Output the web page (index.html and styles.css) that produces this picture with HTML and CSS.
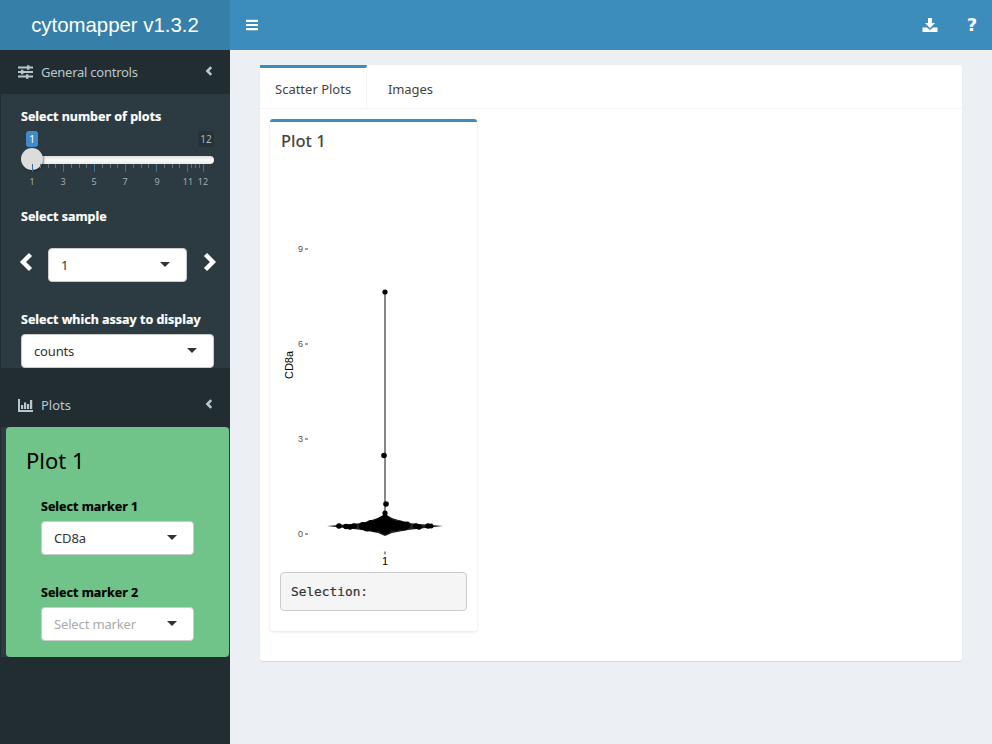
FILE: index.html
```html
<!DOCTYPE html>
<html lang="en">
<head>
<meta charset="utf-8">
<title>cytomapper</title>
<link rel="stylesheet" href="styles.css">
</head>
<body>
<header class="topbar">
  <div class="logo">cytomapper v1.3.2</div>
  <nav class="navbar">
    <svg class="nav-icon burger" width="14" height="14" viewBox="0 0 14 14"><path d="M1 1.700h12v2.200H1zM1 5.900h12v2.200H1zM1 10.100h12v2.200H1z" fill="#fff"/></svg>
    <div class="nav-right">
      <svg class="nav-icon" width="16" height="16" viewBox="0 0 16 16"><path d="M6 1h4v5h3l-5 5-5-5h3z" fill="#fff"/><path d="M0.500 10.500h4.500l3 2.500 3-2.500h4.500V15H0.500z" fill="#fff"/></svg>
      <span class="help">?</span>
    </div>
  </nav>
</header>
<div class="layout">
  <aside class="sidebar">
    <div class="menu-item">
      <svg class="menu-icon" width="15" height="14" viewBox="0 0 15 14"><path d="M0 1.500h15v2H0zM0 6h15v2H0zM0 10.500h15v2H0z" fill="#b8c7ce"/><path d="M9 .2h2.400v4.600H9zM3 4.700h2.400v4.600H3zM8 9.200h2.400v4.600H8z" fill="#b8c7ce"/></svg>
      <span class="menu-label tight">General controls</span>
      <svg class="chev" width="8" height="10" viewBox="0 0 8 10"><path d="M6.200 1.200 2.400 5l3.800 3.800" fill="none" stroke="#b8c7ce" stroke-width="2.600"/></svg>
    </div>
    <div class="tree">
      <div class="label first-label">Select number of plots</div>
      <div class="slider">
        <span class="badge badge-from">1</span>
        <span class="badge badge-to">12</span>
        <div class="track"></div>
        <div class="handle"></div>
        <svg class="ticks" width="200" height="32" viewBox="0 0 200 32">
          <g stroke="#3d6f92" stroke-width="1"><path d="M11.500 0v8M42.500 0v8M73.500 0v8M104.500 0v8M135.500 0v8M166.500 0v8M182.500 0v8"/></g>
          <g stroke="#5f6f78" stroke-width="1"><path d="M19.500 0v4M27.500 0v4M34.500 0v4M50.500 0v4M58.500 0v4M65.500 0v4M81.500 0v4M89.500 0v4M96.500 0v4M112.500 0v4M120.500 0v4M127.500 0v4M143.500 0v4M151.500 0v4M158.500 0v4M170.500 0v4M174.500 0v4M178.500 0v4"/></g>
          <g class="tick-text" text-anchor="middle"><text x="11" y="21">1</text><text x="42" y="21">3</text><text x="73" y="21">5</text><text x="104" y="21">7</text><text x="136" y="21">9</text><text x="167" y="21">11</text><text x="182" y="21">12</text></g>
        </svg>
      </div>
      <div class="label">Select sample</div>
      <div class="sample-row">
        <svg class="arrow" width="14" height="20" viewBox="0 0 14 20"><path d="M11.500 2.500 4 10l7.500 7.500" fill="none" stroke="#fff" stroke-width="4.400"/></svg>
        <div class="select select-sample"><span>1</span><i class="caret"></i></div>
        <svg class="arrow" width="14" height="20" viewBox="0 0 14 20"><path d="M3.500 2.500 11 10l-7.500 7.500" fill="none" stroke="#fff" stroke-width="4.400"/></svg>
      </div>
      <div class="label assay-label">Select which assay to display</div>
      <div class="select"><span>counts</span><i class="caret"></i></div>
    </div>
    <div class="menu-item plots-item">
      <svg class="menu-icon" width="15" height="13" viewBox="0 0 15 13"><path d="M0 0h2v11H15v2H0z" fill="#b8c7ce"/><path d="M3 6h2.200v4H3zM6 3.500h2.200V10H6zM9 5h2.200v5H9zM12 1h2.200v9H12z" fill="#b8c7ce"/></svg>
      <span class="menu-label">Plots</span>
      <svg class="chev" width="8" height="10" viewBox="0 0 8 10"><path d="M6.200 1.200 2.400 5l3.800 3.800" fill="none" stroke="#b8c7ce" stroke-width="2.600"/></svg>
    </div>
    <div class="tree-plots">
      <div class="green-box">
        <h3 class="green-title">Plot 1</h3>
        <div class="marker-group">
          <div class="label dark">Select marker 1</div>
          <div class="select"><span>CD8a</span><i class="caret"></i></div>
          <div class="label dark second-marker">Select marker 2</div>
          <div class="select placeholder"><span>Select marker</span><i class="caret"></i></div>
        </div>
      </div>
    </div>
  </aside>
  <main class="content">
    <section class="tab-box">
      <div class="tabs">
        <div class="tab active">Scatter Plots</div>
        <div class="tab">Images</div>
      </div>
      <div class="tab-body">
        <article class="plot-card">
          <h3 class="plot-title">Plot 1</h3>
          <svg class="plot" width="207" height="410" viewBox="270 162 207 410">
            <g class="axis-y" text-anchor="end"><text x="303" y="252">9</text><text x="303" y="347">6</text><text x="303" y="442">3</text><text x="303" y="537">0</text></g>
            <path d="M305 249h3M305 344h3M305 439h3M305 534h3" stroke="#444" stroke-width="1"/>
            <path d="M385 551.500v3" stroke="#333" stroke-width="1"/>
            <text class="axis-x" x="385" y="565" text-anchor="middle">1</text>
            <text class="axis-name" transform="translate(293 365) rotate(-90)" text-anchor="middle">CD8a</text>
            <path d="M385 292V530" stroke="#555" stroke-width="1.400"/>
            <path d="M327 526 362 523 378 518 385 514 392 518 408 523 443 526 408 530 392 533 385 536 378 533 362 530Z" fill="#222"/>
            <g fill="#000">
              <circle cx="385" cy="292" r="2.600"/><circle cx="384" cy="455.500" r="2.800"/><circle cx="386" cy="504" r="2.800"/><circle cx="385" cy="513" r="2.600"/>
              <circle cx="339" cy="526" r="2.800"/><circle cx="346" cy="526.500" r="2.800"/><circle cx="350" cy="527" r="2.800"/><circle cx="354" cy="526" r="2.800"/>
              <circle cx="363" cy="526" r="4"/><circle cx="367" cy="527" r="4.500"/><circle cx="371" cy="525" r="5"/><circle cx="375" cy="527" r="5"/><circle cx="378" cy="524" r="5.500"/>
              <circle cx="382" cy="522" r="5.500"/><circle cx="385" cy="520" r="5"/><circle cx="388" cy="523" r="5.500"/><circle cx="385" cy="528" r="6.500"/><circle cx="392" cy="525" r="5.500"/>
              <circle cx="396" cy="526" r="5"/><circle cx="400" cy="525" r="4.500"/><circle cx="404" cy="526" r="4.500"/><circle cx="407" cy="525" r="3.500"/>
              <circle cx="416" cy="526" r="2.800"/><circle cx="419" cy="527" r="2.800"/><circle cx="428" cy="526" r="2.800"/><circle cx="431" cy="526" r="2.500"/>
            </g>
          </svg>
          <pre class="selection">Selection:</pre>
        </article>
      </div>
    </section>
  </main>
</div>
</body>
</html>
```
FILE: styles.css
```css
* { box-sizing: border-box; }
html, body { margin: 0; height: 100%; }
body { width: 992px; height: 744px; overflow: hidden; background: #ecf0f5; font-family: "Noto Sans", sans-serif; font-size: 13px; color: #333; }
.topbar { display: flex; height: 50px; }
.logo { width: 230px; background: #367fa9; color: #fff; font: 20.400px/50px "Liberation Sans", sans-serif; text-align: center; }
.navbar { flex: 1; background: #3c8dbc; display: flex; align-items: center; padding: 0 13px 0 15px; }
.nav-right { margin-left: auto; display: flex; align-items: center; gap: 27px; }
.help { width: 14px; color: #fff; font: bold 18px/1 "DejaVu Sans", sans-serif; text-align: center; }
.layout { display: flex; height: 694px; }
.sidebar { width: 230px; background: #222d32; }
.menu-item { height: 44px; display: flex; align-items: center; padding: 0 18px; color: #b8c7ce; }
.menu-icon { flex: none; }
.menu-label { margin-left: 8px; }
.tight { letter-spacing: -.25px; }
.chev { margin-left: auto; margin-top: -3px; margin-right: -1px; }
.tree { margin-left: 1px; height: 274px; background: #2c3b41; padding: 14px 16px 0 20px; }
.label { font-weight: 700; color: #fff; font-size: 12.500px; line-height: 17px; -webkit-text-stroke: .2px currentColor; }
.slider { position: relative; height: 77px; margin-top: 6px; margin-bottom: 0; }
.badge { position: absolute; top: 0; height: 16px; font-size: 10px; line-height: 16px; text-align: center; border-radius: 3px; }
.badge-from { left: 5px; width: 12px; background: #428bca; color: #fff; }
.badge-to { right: 0; width: 16px; background: #263238; color: #aeb8bd; }
.track { position: absolute; left: 8px; right: 0; top: 25px; height: 8px; border-radius: 4px; background: linear-gradient(#dedede, #fafafa 50%, #ececec); }
.handle { position: absolute; left: 0; top: 17px; width: 22px; height: 22px; border-radius: 50%; background: #dcdcdc; box-shadow: 1px 1px 2px rgba(0, 0, 0, .45); }
.ticks { position: absolute; left: 0; top: 33px; }
.tick-text { font: 9px "Noto Sans", sans-serif; fill: #a0acb2; }
.sample-row { display: flex; align-items: center; justify-content: space-between; margin: 23px 0 0 -2px; width: 197px; height: 34px; }
.arrow { flex: none; margin-top: -6px; }
.select { position: relative; height: 34px; background: #fff; border: 1px solid #ccc; border-radius: 4px; color: #333; font-size: 13px; line-height: 32px; padding-left: 12px; letter-spacing: -.15px; }
.select-sample { width: 139px; }
.caret { position: absolute; right: 16px; top: 13px; width: 0; height: 0; border-left: 5px solid transparent; border-right: 5px solid transparent; border-top: 5px solid #333; }
.assay-label { margin-top: 29px; margin-bottom: 6px; }
.plots-item { margin-top: 15px; }
.tree-plots { margin-left: 1px; background: #2c3b41; height: 230px; padding-left: 5px; padding-right: 1px; }
.green-box { height: 230px; background: #70c489; border-radius: 4px; padding: 20px 20px 20px; }
.green-title { margin: 0; font-size: 22px; line-height: 26px; font-weight: 400; color: #000; }
.marker-group { padding: 25px 15px 0; }
.label.dark { color: #000; }
.second-marker { margin-top: 29px; }
.marker-group .label { margin-bottom: 6px; }
.placeholder { color: #aaa; }
.content { flex: 1; padding: 15px 30px; }
.tab-box { height: 596px; background: #fff; border-radius: 3px; box-shadow: 0 1px 1px rgba(0, 0, 0, .1); }
.tabs { display: flex; height: 44px; border-bottom: 1px solid #f4f4f4; }
.tab { padding: 3px 21px 0; height: 44px; line-height: 43px; font-size: 13px; color: #444; letter-spacing: -.1px; }
.tab.active { width: 107px; padding: 0 0 0 15px; border-top: 3px solid #3c8dbc; border-right: 1px solid #f4f4f4; letter-spacing: 0; }
.tab-body { padding: 10px; }
.plot-card { width: 207px; height: 512px; background: #fff; border-top: 3px solid #3c8dbc; border-radius: 3px; box-shadow: 0 1px 3px rgba(0, 0, 0, .12); }
.plot-title { margin: 0; padding: 7px 11px 0; font-size: 16.500px; line-height: 24px; font-weight: 500; color: #444; height: 40px; }
.plot { display: block; }
.axis-y { font: 9px "Liberation Sans", sans-serif; fill: #4d4d4d; }
.axis-x, .axis-name { font: 11px "Liberation Sans", sans-serif; fill: #000; }
.selection { margin: 0 10px; height: 39px; padding: 10px 10px 0; background: #f5f5f5; border: 1px solid #ccc; border-radius: 4px; font: 12.800px/18px "DejaVu Sans Mono", monospace; color: #333; -webkit-text-stroke: .2px currentColor; }
```
